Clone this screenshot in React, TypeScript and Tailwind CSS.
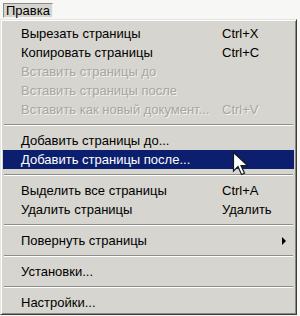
import { Fragment } from 'react';

type Item =
    | { kind: 'item'; label: string; shortcut?: string; disabled?: boolean; active?: boolean; submenu?: boolean }
    | { kind: 'sep' };

const items: Item[] = [
    { kind: 'item', label: 'Вырезать страницы', shortcut: 'Ctrl+X' },
    { kind: 'item', label: 'Копировать страницы', shortcut: 'Ctrl+C' },
    { kind: 'item', label: 'Вставить страницы до', disabled: true },
    { kind: 'item', label: 'Вставить страницы после', disabled: true },
    { kind: 'item', label: 'Вставить как новый документ...', shortcut: 'Ctrl+V', disabled: true },
    { kind: 'sep' },
    { kind: 'item', label: 'Добавить страницы до...' },
    { kind: 'item', label: 'Добавить страницы после...', active: true },
    { kind: 'sep' },
    { kind: 'item', label: 'Выделить все страницы', shortcut: 'Ctrl+A' },
    { kind: 'item', label: 'Удалить страницы', shortcut: 'Удалить' },
    { kind: 'sep' },
    { kind: 'item', label: 'Повернуть страницы', submenu: true },
    { kind: 'sep' },
    { kind: 'item', label: 'Установки...' },
    { kind: 'sep' },
    { kind: 'item', label: 'Настройки...' },
];

// mouse pointer drawn over the highlighted row
function Cursor() {
    return (
        <svg width="17" height="26" viewBox="0 0 17 26" className="absolute left-[232px] top-[151px]">
            <path
                d="M1.5 1.5 L1.5 20 L6 15.5 L9.5 23.5 L12.5 22.2 L9 14.5 L15.5 14.5 Z"
                fill="#ffffff"
                stroke="#1a1a1a"
                strokeWidth="1.2"
                strokeLinejoin="miter"
            />
        </svg>
    );
}

export default function App() {
    return (
        <div className="relative w-[300px] h-[316px] bg-[#f7f7f5] font-['Liberation_Sans',Arial,sans-serif] text-[13px] text-black overflow-hidden">
            {/* Menu bar title */}
            <div className="h-[19px] pt-[3px] pl-[3px]">
                <div className="w-[50px] h-[15px] bg-[#d6d4ce] border-t border-l border-[#8a8a86] border-b border-b-[#f4f4f2] border-r border-r-[#f4f4f2] flex items-center pl-[2px] leading-none">
                    Правка
                </div>
            </div>

            {/* Dropdown */}
            <div className="w-[297px] h-[296px] bg-[#d6d5cf] border-t border-l border-[#e6e5e1] border-r border-r-[#3c3c3a] border-b border-b-[#3c3c3a] shadow-[inset_1px_1px_#ffffff,inset_-1px_-1px_#8a8985] px-[2px] pt-[4px]">
                {items.map((item, i) => (
                    <Fragment key={i}>
                        {item.kind === 'sep' ? (
                            <div className="h-[12px] flex items-center px-[1px]">
                                <div className="w-full border-t border-[#8e8d89] border-b border-b-white" />
                            </div>
                        ) : (
                            <div
                                className={`relative h-[19px] flex items-center pl-[18px] whitespace-nowrap ${item.active ? 'bg-[#0c1f6e] text-white' : ''
                                    } ${item.disabled ? 'text-[#a7a6a1] [text-shadow:1px_1px_0_#f2f2ee]' : ''}`}
                            >
                                <span className="w-[201px] shrink-0">{item.label}</span>
                                {item.shortcut && <span>{item.shortcut}</span>}
                                {item.submenu && (
                                    <span className="absolute right-[8px] top-[6px] w-0 h-0 border-y-[4px] border-y-transparent border-l-[4px] border-l-black" />
                                )}
                            </div>
                        )}
                    </Fragment>
                ))}
            </div>

            <Cursor />
        </div>
    );
}
